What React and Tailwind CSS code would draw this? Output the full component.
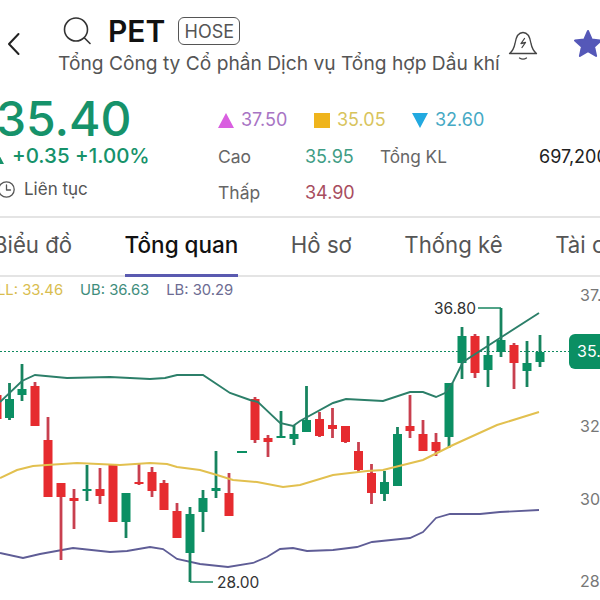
import React from 'react';

const UP = '#0b8f63';
const DOWN = '#e62b2f';

// x, wick top, wick bottom, body top, body bottom, up?
const candles = [
  [-3, 395, 419, 395, 419, 0],
  [9.5, 383, 420, 399, 418, 1],
  [22, 364, 401, 389, 395, 1],
  [35, 382, 426, 386, 426, 0],
  [48, 417, 497, 440, 497, 0],
  [61, 483, 560, 483, 497, 0],
  [74, 489, 529, 498, 501, 0],
  [87, 465, 501, 489, 491, 1],
  [100, 468, 504, 489, 496, 0],
  [113, 464, 522, 464, 522, 0],
  [126, 493, 538, 493, 522, 1],
  [139, 464, 485, 482, 484, 0],
  [152, 467, 497, 472, 491, 0],
  [164, 480, 510, 483, 510, 0],
  [177, 503, 538, 511, 538, 0],
  [190, 507, 582, 514, 553, 1],
  [203, 490, 532, 498, 512, 1],
  [216, 451, 498, 488, 491, 1],
  [229, 473, 516, 493, 516, 0],
  [255, 397, 443, 399, 440, 0],
  [268, 435, 457, 438, 442, 0],
  [281, 411, 438, 436, 438, 1],
  [294, 425, 445, 434, 439, 1],
  [306.5, 386, 432, 420, 432, 1],
  [319.5, 412, 437, 419, 436, 0],
  [332.5, 408, 438, 425, 429, 0],
  [345.5, 426, 443, 426, 442, 0],
  [358.5, 442, 472, 451, 470, 0],
  [371.5, 464, 504, 473, 493, 0],
  [384.5, 471, 501, 482, 494, 1],
  [397.5, 427, 486, 434, 486, 1],
  [410, 395, 438, 426, 431, 0],
  [423, 420, 451, 434, 451, 0],
  [436, 433, 456, 442, 451, 0],
  [449, 383, 448, 383, 437, 1],
  [462, 327, 379, 336, 363, 1],
  [475, 334, 378, 336, 373, 0],
  [488, 336, 387, 355, 370, 1],
  [501, 308, 357, 340, 352, 1],
  [514, 343, 389, 345, 363, 0],
  [527, 341, 387, 363, 371, 1],
  [540, 335, 367, 352, 362, 1],
];

const upperBand = '0,402 22,381 35,375 67,378 110,377 150,379 165,378 177,375 203,375 230,393 250,400 258,402 280,423 293,426 300,421 333,403 346,399 383,401 410,392 423,392 436,397 445,393 453,382 463,362 500,338 539,313';
const midBand = '0,478 17,470 33,466 47,465 77,463 120,465 150,463 167,464 177,467 200,470 217,475 233,480 257,482 283,487 300,485 333,475 367,471 383,470 423,460 453,445 497,425 539,412';
const lowBand = '0,553 23,558 40,554 73,548 110,552 127,551 150,547 163,549 177,559 200,564 228,567 253,563 267,557 280,549 293,548 307,551 333,550 357,547 372,542 410,538 423,532 436,518 450,514 480,514 500,512 539,510';

const Chart = () => (
  <svg viewBox="0 277 600 323" className="block w-[600px] h-[323px]" fontFamily="Inter, sans-serif">
    <line x1="0" y1="351.5" x2="570" y2="351.5" stroke="#0f8a60" strokeWidth="1.2" strokeDasharray="2 2" />
    <polyline points={lowBand} fill="none" stroke="#5f5d96" strokeWidth="1.8" />
    {candles.map(([x, wt, wb, bt, bb, up]) => (
      <g key={x}>
        <line x1={x} y1={wt} x2={x} y2={wb} stroke={up ? '#17845f' : '#c8404f'} strokeWidth="2.8" />
        <rect x={x - 4.5} y={bt} width="9" height={bb - bt} fill={up ? UP : DOWN} />
      </g>
    ))}
    <rect x="237" y="451" width="10" height="2" fill={UP} />
    <polyline points={midBand} fill="none" stroke="#e2c04f" strokeWidth="2" />
    <polyline points={upperBand} fill="none" stroke="#2c7f69" strokeWidth="1.9" />
    <polyline points="478,308 501,308" fill="none" stroke="#17845f" strokeWidth="1.5" />
    <polyline points="190,582 213,582" fill="none" stroke="#17845f" strokeWidth="1.5" />
    <text x="434" y="314" fontSize="15.5" fill="#333">36.80</text>
    <text x="217" y="588" fontSize="15.5" fill="#333">28.00</text>
    <rect x="569" y="334" width="40" height="35" rx="6" fill={UP} />
    <text x="577" y="357" fontSize="16" fill="#fff">35.40</text>
    <g fontSize="16" fill="#777">
      <text x="580" y="301">37.50</text>
      <text x="580" y="432">32.50</text>
      <text x="580" y="505">30.00</text>
      <text x="580" y="587">28.00</text>
    </g>
  </svg>
);

const BellIcon = () => (
  <svg width="30" height="32" viewBox="0 0 30 32" fill="none" stroke="#444" strokeWidth="1.3" strokeLinecap="round" strokeLinejoin="round">
    <path d="M1.500 24.500c3.500-2.500 4.500-5 5.500-10 .9-6 3.500-11 8-11s7.100 5 8 11c1 5 2.300 7.500 5.500 10z" />
    <path d="M16.500 9.500l-3.500 5 4.500-1-3.500 5" />
    <path d="M11.500 29c2 1.300 5 1.300 7 0" />
  </svg>
);

const SearchIcon = () => (
  <svg width="28" height="28" viewBox="0 0 28 28" fill="none" stroke="#333" strokeWidth="1.6" strokeLinecap="round">
    <circle cx="13" cy="12.500" r="11.500" />
    <path d="M21.500 21l5.500 5.500" />
  </svg>
);

const ChevronIcon = () => (
  <svg width="14" height="24" viewBox="0 0 14 24" fill="none" stroke="#222" strokeWidth="2" strokeLinecap="round" strokeLinejoin="round">
    <path d="M11.500 2L2 12l9.500 10" />
  </svg>
);

const StarIcon = () => (
  <svg width="30" height="30" viewBox="0 0 30 30" fill="#5558b8" stroke="#5558b8" strokeWidth="2" strokeLinejoin="round">
    <path d="M15 2l3.800 8.600 9.200 1-6.900 6.200 2 9.200-8.100-4.800-8.100 4.800 2-9.200L2 11.600l9.200-1z" />
  </svg>
);

const ClockIcon = () => (
  <svg width="17" height="17" viewBox="0 0 17 17" fill="none" stroke="#555" strokeWidth="1.3" strokeLinecap="round" strokeLinejoin="round">
    <circle cx="8.500" cy="8.500" r="7.700" />
    <path d="M8.500 4v5h4" />
  </svg>
);

const Triangle = ({ className }) => (
  <svg width="16" height="15" viewBox="0 0 16 15" className={className} fill="currentColor">
    <path d="M8 0l8 15H0z" />
  </svg>
);

const tabs = ['Biểu đồ', 'Tổng quan', 'Hồ sơ', 'Thống kê', 'Tài chính'];

export default function App() {
  return (
    <div className="w-[600px] h-[600px] overflow-hidden bg-white font-['Inter',sans-serif]">
      {/* header */}
      <div className="h-[97px] flex">
        <div className="w-[58px] pl-[7px] pt-[32px] shrink-0">
          <ChevronIcon />
        </div>
        <div className="w-[450px] shrink-0">
          <div className="flex items-center h-[28px] mt-[17px] pl-[5px]">
            <SearchIcon />
            <span className="ml-[17px] text-[30px] leading-none font-semibold text-[#111]">PET</span>
            <span className="ml-[13px] h-[28px] w-[62px] flex items-center justify-center border-[1.5px] border-[#555] rounded-[6px] text-[18px] text-[#555]">HOSE</span>
          </div>
          <div className="mt-[5px] text-[19.200px] leading-[26px] text-[#555] whitespace-nowrap">
            Tổng Công ty Cổ phần Dịch vụ Tổng hợp Dầu khí
          </div>
        </div>
        <div className="flex gap-[35px] pt-[29px] shrink-0">
          <BellIcon />
          <StarIcon />
        </div>
      </div>

      {/* price + stats */}
      <div className="h-[119px] flex">
        <div className="w-[218px] shrink-0 -ml-[4px]">
          <div className="text-[48px] leading-[44px] font-medium text-[#16926a]">35.40</div>
          <div className="flex items-center h-[20px] mt-[5px] gap-[8px] -ml-[8px]">
            <Triangle className="text-[#16926a]" />
            <span className="text-[20.500px] leading-none font-medium text-[#16926a] whitespace-nowrap">+0.35 +1.00%</span>
          </div>
          <div className="flex items-center mt-[13px] gap-[9px] ml-[2px]">
            <ClockIcon />
            <span className="text-[17px] leading-[20px] text-[#555]">Liên tục</span>
          </div>
        </div>
        <div className="ml-[4px] text-[18px] leading-[24px] whitespace-nowrap">
          <div className="flex items-center h-[24px] mt-[11px]">
            <Triangle className="text-[#d95fe0]" />
            <span className="ml-[7px] w-[73px] text-[#a874c4]">37.50</span>
            <span className="w-[16px] h-[15px] bg-[#efb41c]" />
            <span className="ml-[7px] w-[75px] text-[#d8c45c]">35.05</span>
            <Triangle className="text-[#22a9e0] rotate-180" />
            <span className="ml-[7px] text-[#46a9c4]">32.60</span>
          </div>
          <div className="flex mt-[13px] h-[24px]">
            <span className="w-[87px] text-[17.500px] text-[#666]">Cao</span>
            <span className="w-[75px] text-[#3f9d85]">35.95</span>
            <span className="w-[159px] text-[17.200px] text-[#666]">Tổng KL</span>
            <span className="text-[#222]">697,200</span>
          </div>
          <div className="flex mt-[12px] h-[24px]">
            <span className="w-[87px] text-[17.500px] text-[#666]">Thấp</span>
            <span className="text-[#a84d5e]">34.90</span>
          </div>
        </div>
      </div>

      {/* tabs */}
      <div className="h-[61px] border-y-2 border-[#e4e4e4] flex gap-[52.500px] -ml-[7px] w-[1000px] text-[22.200px] text-[#555] whitespace-nowrap">
        {tabs.map((tab) => (
          <div
            key={tab}
            className={tab === 'Tổng quan'
              ? 'h-[59px] pt-[10px] border-b-[3px] border-[#5a5ab0] text-[22.500px] text-[#111] font-medium'
              : 'h-[59px] pt-[10px]'}
          >
            {tab}
          </div>
        ))}
      </div>

      {/* indicator legend */}
      <div className="h-0 relative z-10">
        <div className="flex gap-[17px] -ml-[3px] pt-[3px] text-[14.800px] leading-[20px] whitespace-nowrap">
          <span className="text-[#d9bd4f]">LL: 33.46</span>
          <span className="text-[#3f8d7c]">UB: 36.63</span>
          <span className="text-[#6d6c92]">LB: 30.29</span>
        </div>
      </div>
      <Chart />
    </div>
  );
}
